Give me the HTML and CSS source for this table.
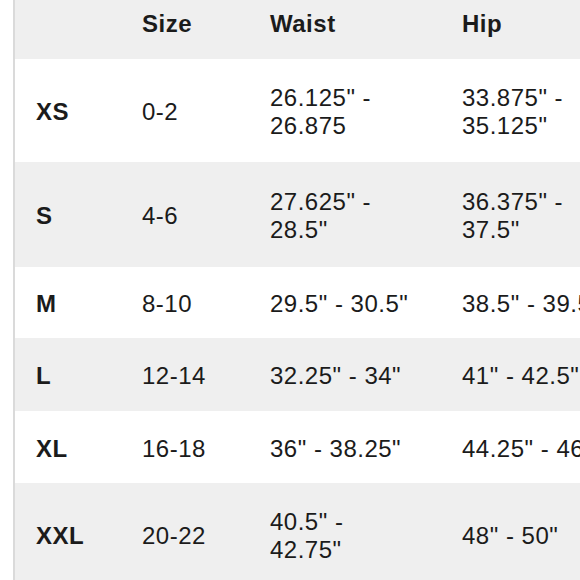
FILE: index.html
```html
<!DOCTYPE html>
<html>
<head>
<meta charset="utf-8">
<link rel="stylesheet" href="styles.css">
</head>
<body>
<div class="page">
  <div class="chart">
    <div class="row head">
      <div class="cell"></div>
      <div class="cell">Size</div>
      <div class="cell">Waist</div>
      <div class="cell">Hip</div>
    </div>
    <div class="row tall">
      <div class="cell label">XS</div>
      <div class="cell">0-2</div>
      <div class="cell">26.125" -<br>26.875</div>
      <div class="cell">33.875" -<br>35.125"</div>
    </div>
    <div class="row tall alt s">
      <div class="cell label">S</div>
      <div class="cell">4-6</div>
      <div class="cell">27.625" -<br>28.5"</div>
      <div class="cell">36.375" -<br>37.5"</div>
    </div>
    <div class="row short m">
      <div class="cell label">M</div>
      <div class="cell">8-10</div>
      <div class="cell">29.5" - 30.5"</div>
      <div class="cell">38.5" - 39.5"</div>
    </div>
    <div class="row short alt l">
      <div class="cell label">L</div>
      <div class="cell">12-14</div>
      <div class="cell">32.25" - 34"</div>
      <div class="cell">41" - 42.5"</div>
    </div>
    <div class="row short">
      <div class="cell label">XL</div>
      <div class="cell">16-18</div>
      <div class="cell">36" - 38.25"</div>
      <div class="cell">44.25" - 46.5"</div>
    </div>
    <div class="row tall alt">
      <div class="cell label">XXL</div>
      <div class="cell">20-22</div>
      <div class="cell">40.5" -<br>42.75"</div>
      <div class="cell">48" - 50"</div>
    </div>
  </div>
</div>
</body>
</html>
```

FILE: styles.css
```css
html, body {
  margin: 0;
  padding: 0;
  background: #ffffff;
  overflow: hidden;
  width: 580px;
  height: 580px;
}

.page {
  padding-left: 13px;
  width: 700px;
}

.chart {
  border-left: 2px solid #dadada;
  font-family: "Liberation Sans", Arial, Helvetica, sans-serif;
  font-size: 24px;
  line-height: 28px;
  letter-spacing: 0.5px;
  color: #1b1b1b;
}

.row {
  display: grid;
  grid-template-columns: 106px 128px 192px 220px;
  align-items: center;
  background: #ffffff;
  white-space: nowrap;
}

.row.alt,
.row.head {
  background: #efefef;
}

.head {
  height: 59px;
  align-items: start;
  font-weight: bold;
}

.head .cell {
  padding-top: 10px;
}

.tall {
  height: 103px;
}

.tall.s {
  height: 105px;
}

.short {
  height: 72px;
}

.short.m {
  height: 71px;
}

.short.l {
  height: 73px;
}

.cell {
  padding-left: 21px;
  padding-top: 3px;
}

.label {
  font-weight: bold;
}
```
